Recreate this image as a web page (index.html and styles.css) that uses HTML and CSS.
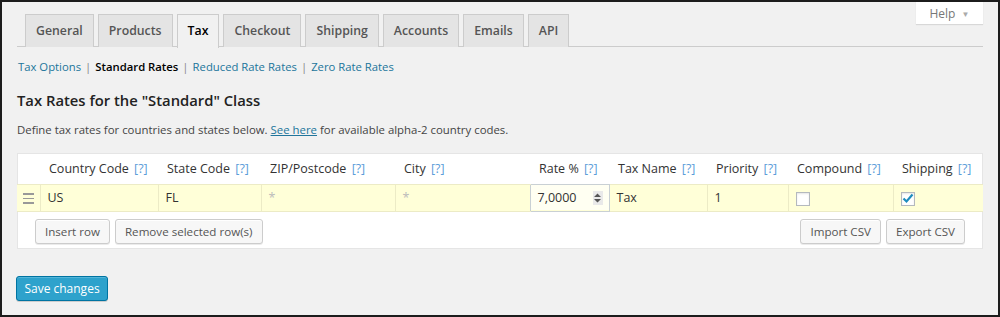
FILE: index.html
```html
<!DOCTYPE html>
<html>
<head>
<meta charset="utf-8">
<link rel="stylesheet" href="styles.css">
</head>
<body>
<div class="frame">
  <button class="help">Help <span class="caret">&#9660;</span></button>
  <div class="wrap">
    <nav class="tabs">
      <a class="tab">General</a>
      <a class="tab">Products</a>
      <a class="tab active">Tax</a>
      <a class="tab">Checkout</a>
      <a class="tab">Shipping</a>
      <a class="tab">Accounts</a>
      <a class="tab">Emails</a>
      <a class="tab">API</a>
    </nav>
    <div class="subnav">
      <a class="link">Tax Options</a><span class="sep">|</span><b class="current">Standard Rates</b><span class="sep">|</span><a class="link">Reduced Rate Rates</a><span class="sep">|</span><a class="link">Zero Rate Rates</a>
    </div>
    <h3 class="title">Tax Rates for the "Standard" Class</h3>
    <p class="desc">Define tax rates for countries and states below. <a class="ulink">See here</a> for available alpha-2 country codes.</p>
    <div class="box">
      <table class="rates">
        <colgroup>
          <col style="width:23px"><col style="width:118px"><col style="width:103px"><col style="width:134px"><col style="width:135px"><col style="width:79px"><col style="width:98px"><col style="width:81px"><col style="width:105px"><col style="width:90px">
        </colgroup>
        <thead>
          <tr>
            <th></th>
            <th>Country Code <span class="q">[?]</span></th>
            <th>State Code <span class="q">[?]</span></th>
            <th>ZIP/Postcode <span class="q">[?]</span></th>
            <th>City <span class="q">[?]</span></th>
            <th>Rate % <span class="q">[?]</span></th>
            <th>Tax Name <span class="q">[?]</span></th>
            <th>Priority <span class="q">[?]</span></th>
            <th>Compound <span class="q">[?]</span></th>
            <th>Shipping <span class="q">[?]</span></th>
          </tr>
        </thead>
        <tbody>
          <tr class="row">
            <td class="handle"><span class="bars"><i></i><i></i><i></i></span></td>
            <td>US</td>
            <td>FL</td>
            <td class="ph">*</td>
            <td class="ph">*</td>
            <td class="rate"><div class="ratein"><span>7,0000</span><span class="spin"><svg width="9" height="12" viewBox="0 0 9 12"><path d="M4.5 1.5 L8 5 H1 Z M4.5 10.5 L8 7 H1 Z" fill="#555"/></svg></span></div></td>
            <td>Tax</td>
            <td>1</td>
            <td><span class="cb"></span></td>
            <td><span class="cb"><svg width="12" height="11" viewBox="0 0 12 11"><path d="M1.5 5.5 L4.5 8.5 L10.5 1.5" fill="none" stroke="#1e8cbe" stroke-width="2.2"/></svg></span></td>
          </tr>
        </tbody>
      </table>
      <div class="actions">
        <div class="group">
          <button class="btn">Insert row</button>
          <button class="btn">Remove selected row(s)</button>
        </div>
        <div class="group">
          <button class="btn">Import CSV</button>
          <button class="btn">Export CSV</button>
        </div>
      </div>
    </div>
    <button class="primary">Save changes</button>
  </div>
</div>
</body>
</html>
```

FILE: styles.css
```css
* { box-sizing: border-box; }
html, body { margin: 0; padding: 0; }
body {
  font-family: "Open Sans", "Liberation Sans", sans-serif;
  background: #1a1a1a;
}
.frame {
  position: relative;
  width: 1000px;
  height: 317px;
  background: #f1f1f1;
  border-style: solid;
  border-color: #1c1c1c;
  border-width: 2px 2px 2px 2px;
  overflow: hidden;
}
.wrap {
  margin-left: 15px;
  width: 966px;
}
.help {
  position: absolute;
  top: -2px;
  right: 15px;
  width: 67px;
  height: 24px;
  background: #fff;
  border: none;
  box-shadow: 0 1px 1px rgba(0,0,0,0.1);
  font-family: inherit;
  font-size: 12px;
  color: #777;
  padding: 2px 0 0 0;
}
.help .caret { font-size: 8px; color: #aaa; margin-left: 3px; vertical-align: 1px; }
.tabs {
  display: flex;
  gap: 4px;
  padding-left: 8px;
  margin-top: 12px;
  border-bottom: 1px solid #ccc;
  height: 33px;
}
.tab {
  display: block;
  height: 33px;
  padding: 0 10px;
  border: 1px solid #ccc;
  border-bottom: none;
  background: #e4e4e4;
  color: #555;
  font-size: 12.3px;
  font-weight: 600;
  line-height: 32px;
}
.tab.active {
  background: #f1f1f1;
  color: #000;
  height: 34px;
  margin-bottom: -1px;
}
.subnav {
  margin-top: 11px;
  font-size: 11.3px;
  line-height: 18px;
  padding-left: 1px;
  color: #666;
}
.link { color: #21759b; }
.current { color: #000; font-weight: 600; }
.sep { margin: 0 4px; color: #888; }
.title {
  margin: 14px 0 0 0;
  font-size: 14.8px;
  font-weight: 600;
  line-height: 20px;
  color: #222;
}
.desc {
  margin: 11px 0 0 0;
  font-size: 11.4px;
  line-height: 18px;
  color: #444;
}
.ulink { color: #21759b; text-decoration: underline; }
.box {
  margin-top: 14px;
  background: #fff;
  border: 1px solid #e5e5e5;
  height: 96px;
}
.rates {
  width: 966px;
  margin: -1px 0 0 -1px;
  border-collapse: collapse;
  table-layout: fixed;
}
.rates th {
  height: 31px;
  text-align: left;
  font-weight: 400;
  font-size: 12.5px;
  color: #333;
  padding: 0 0 0 9px;
  white-space: nowrap;
}
.q { color: #5b9dd9; margin-left: 2px; }
.row td {
  height: 27px;
  background: #ffffd8;
  border-top: 1px solid #ecebc6;
  border-bottom: 1px solid #ecebc6;
  border-left: 1px solid #ecebc6;
  font-size: 12.5px;
  color: #333;
  padding: 0 0 0 7px;
}
.row td:first-child { border-left: none; }
.row td.ph { color: #bbb; }
.handle { padding: 0 !important; text-align: center; }
.bars { display: inline-flex; flex-direction: column; gap: 3px; vertical-align: middle; }
.bars i { display: block; width: 11px; height: 1.5px; background: #999; }
.row td.rate { padding: 0; border: 1px solid #c9d0d4; }
.ratein {
  display: flex;
  align-items: center;
  justify-content: space-between;
  height: 25px;
  padding: 0 6px 0 7px;
  background: #fffff2;
}
.spin {
  display: flex;
  align-items: center;
  justify-content: center;
  width: 10px;
  height: 14px;
  background: #e9e9e9;
}
.cb {
  display: inline-flex;
  align-items: center;
  justify-content: center;
  width: 14px;
  height: 14px;
  border: 1px solid #b4b9be;
  background: #fff;
  vertical-align: middle;
  box-shadow: inset 0 1px 2px rgba(0,0,0,0.1);
}
.actions {
  display: flex;
  justify-content: space-between;
  padding: 7px 17px 0 17px;
}
.group { display: flex; gap: 5px; }
.btn {
  height: 25px;
  padding: 0 9px;
  font-family: inherit;
  font-size: 11.6px;
  color: #555;
  background: #f7f7f7;
  border: 1px solid #ccc;
  border-radius: 3px;
  box-shadow: inset 0 1px 0 #fff, 0 1px 0 rgba(0,0,0,0.08);
}
.primary {
  display: block;
  margin: 27px 0 0 -1px;
  height: 25px;
  width: 92px;
  padding: 0;
  font-family: inherit;
  font-size: 12px;
  color: #fff;
  background: #2ea2cc;
  border: 1px solid #0074a2;
  border-radius: 3px;
  box-shadow: inset 0 1px 0 rgba(120,200,230,0.5), 0 1px 0 rgba(0,0,0,0.15);
}
```
